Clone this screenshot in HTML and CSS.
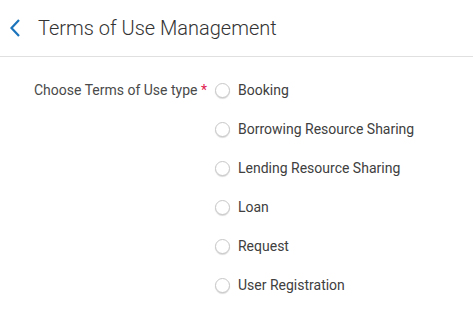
FILE: index.html
```html
<!DOCTYPE html>
<html>
    <head>
        <meta charset="utf-8">
        <title>Terms of Use Management</title>
        <link rel="stylesheet" href="styles.css">
    </head>
    <body>
        <div class="header">
            <button class="back">
                <svg width="12" height="20" viewBox="0 0 12 20"><path d="M10 2 L2.5 10 L10 18" fill="none" stroke="#1c75bc" stroke-width="2.2"/></svg>
            </button>
            <h1 class="title">Terms of Use Management</h1>
        </div>
        <div class="form">
            <div class="label">Choose Terms of Use type <span class="req">*</span></div>
            <div class="options">
                <label class="option"><span class="radio"></span>Booking</label>
                <label class="option"><span class="radio"></span>Borrowing Resource Sharing</label>
                <label class="option"><span class="radio"></span>Lending Resource Sharing</label>
                <label class="option"><span class="radio"></span>Loan</label>
                <label class="option"><span class="radio"></span>Request</label>
                <label class="option"><span class="radio"></span>User Registration</label>
            </div>
        </div>
    </body>
</html>
```
FILE: styles.css
```css
body {
    margin: 0;
    font-family: Roboto, "Liberation Sans", sans-serif;
    background-color: white;
}

div.header {
    display: flex;
    align-items: center;
    height: 56px;
    border-bottom: 1px solid #e0e0e0;
    padding-left: 8px;
}
button.back {
    border: none;
    background: transparent;
    padding: 0;
    width: 14px;
    height: 20px;
    margin-right: 16px;
    cursor: pointer;
}
h1.title {
    margin: 0;
    font-size: 20px;
    font-weight: 300;
    color: #333;
}

div.form {
    display: flex;
    padding-top: 23px;
    padding-left: 34px;
}
div.label {
    font-size: 14px;
    color: #4a4a4a;
    line-height: 20px;
    margin-right: 8px;
}
span.req {
    color: #e0204f;
}
div.options {
    display: flex;
    flex-direction: column;
    gap: 19px;
}
label.option {
    display: flex;
    align-items: center;
    font-size: 14px;
    line-height: 20px;
    color: #404040;
}
span.radio {
    width: 13px;
    height: 13px;
    border: 1px solid #c8c8c8;
    border-radius: 50%;
    margin-right: 8px;
    box-shadow: 0 1px 1px rgba(0,0,0,0.15);
    background-color: white;
}
```
